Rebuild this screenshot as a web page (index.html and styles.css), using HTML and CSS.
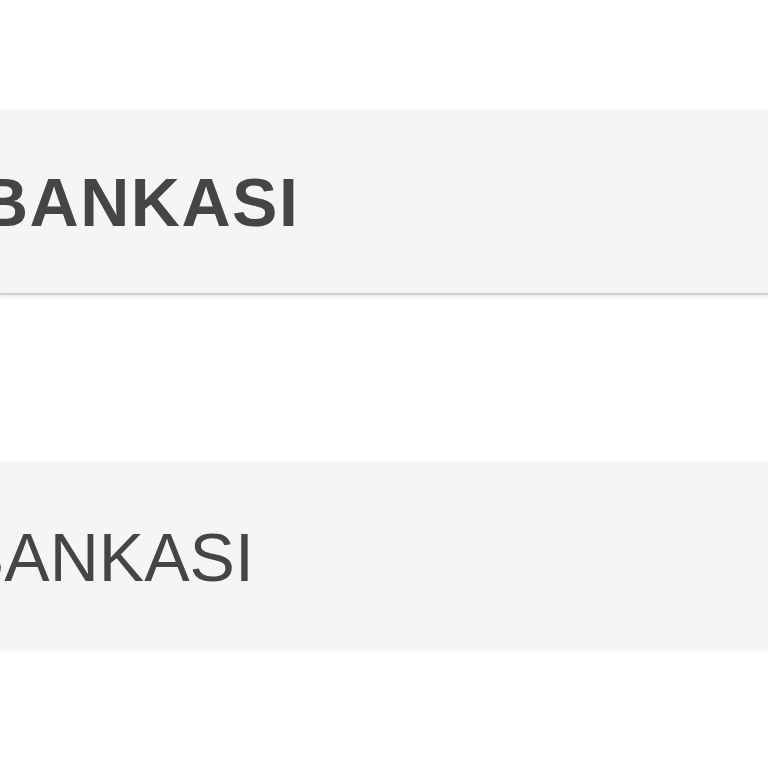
FILE: index.html
```html
<!DOCTYPE html>
<html>
<head>
<meta charset="utf-8">
<link rel="stylesheet" href="styles.css">
</head>
<body>
<div class="page">
  <div class="bar bar-bold"><span class="label label-bold">BANKASI</span></div>
  <div class="bar bar-regular"><span class="label label-regular">BANKASI</span></div>
</div>
</body>
</html>
```
FILE: styles.css
```css
html, body {
  margin: 0;
  padding: 0;
  background: #ffffff;
  width: 768px;
  height: 768px;
  overflow: hidden;
}
.page {
  display: flex;
  flex-direction: column;
  padding-top: 110px;
  gap: 167px;
}
.bar {
  background: #f5f5f5;
  display: flex;
  align-items: center;
  overflow: hidden;
}
.bar-bold {
  height: 183px;
  border-bottom: 2px solid #cfcfcf;
  box-shadow: 0 2px 4px rgba(0,0,0,0.08), 0 -1px 3px rgba(0,0,0,0.03);
}
.bar-regular {
  height: 189px;
  box-shadow: 0 0 3px rgba(0,0,0,0.04);
}
.label {
  font-family: "Liberation Sans", Arial, sans-serif;
  font-size: 68px;
  color: #454545;
  white-space: nowrap;
  line-height: 1;
}
.label-bold {
  font-weight: bold;
  letter-spacing: 1.5px;
  margin-left: -21px;
}
.label-regular {
  font-weight: normal;
  margin-left: -41px;
}
```
